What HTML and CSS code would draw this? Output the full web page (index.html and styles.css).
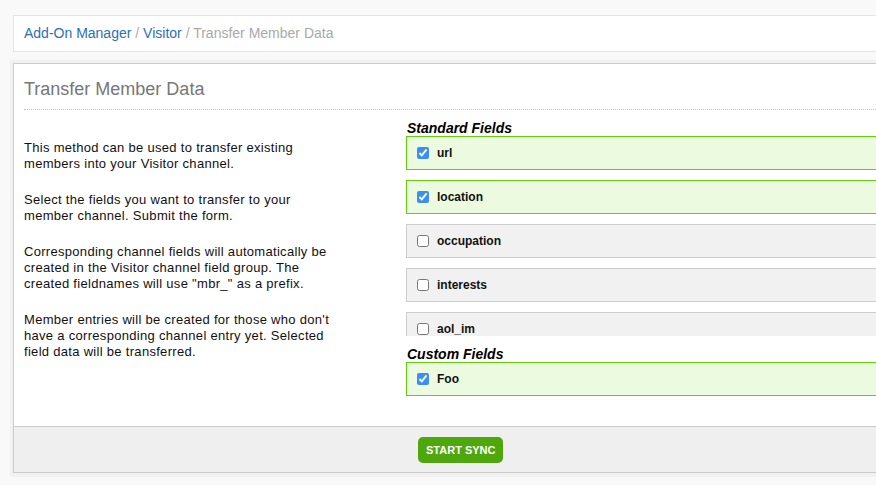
FILE: index.html
```html
<!DOCTYPE html>
<html>
<head>
<meta charset="UTF-8">
<title>Transfer Member Data</title>
<link rel="stylesheet" href="styles.css">
</head>
<body>
	<div class="page">
		<div class="breadcrumb">
			<a href="#">Add-On Manager</a> <span class="sep">/</span>
			<a href="#">Visitor</a> <span class="sep">/</span>
			<span class="current">Transfer Member Data</span>
		</div>

		<div class="wrap">
			<form class="panel">
				<div class="panel-head">
					<h2>Transfer Member Data</h2>
				</div>

				<div class="panel-body">
					<div class="intro">
						<p>This method can be used to transfer existing members into your Visitor channel.</p>
						<p>Select the fields you want to transfer to your member channel. Submit the form.</p>
						<p>Corresponding channel fields will automatically be created in the Visitor channel field group. The created fieldnames will use "mbr_" as a prefix.</p>
						<p>Member entries will be created for those who don't have a corresponding channel entry yet. Selected field data will be transferred.</p>
					</div>

					<div class="fields">
						<h4>Standard Fields</h4>
						<div class="field-list scroll">
							<label class="field checked"><input type="checkbox" name="url" checked><span>url</span></label>
							<label class="field checked"><input type="checkbox" name="location" checked><span>location</span></label>
							<label class="field"><input type="checkbox" name="occupation"><span>occupation</span></label>
							<label class="field"><input type="checkbox" name="interests"><span>interests</span></label>
							<label class="field"><input type="checkbox" name="aol_im"><span>aol_im</span></label>
						</div>
						<h4>Custom Fields</h4>
						<div class="field-list">
							<label class="field checked"><input type="checkbox" name="foo" checked><span>Foo</span></label>
						</div>
					</div>
				</div>

				<div class="panel-foot">
					<button type="button" class="btn">Start Sync</button>
				</div>
			</form>
		</div>
	</div>
</body>
</html>
```

FILE: styles.css
```css
* {
	margin: 0;
	padding: 0;
	box-sizing: border-box;
}
html, body {
	overflow: hidden;
}
body {
	background-color: #f9f9f9;
	color: #111;
	font-family: "Liberation Sans", Arial, Helvetica, sans-serif;
	font-size: 13px;
}
.page {
	width: 940px;
}

/* breadcrumb */
.breadcrumb {
	margin: 15px 0 0 13px;
	height: 37px;
	padding: 0 10px;
	line-height: 35px;
	font-size: 14px;
	background-color: #fff;
	border: 1px solid #e4e4e4;
	border-right: none;
	color: #aaa;
}
.breadcrumb a {
	color: #2b6fb8;
	text-decoration: none;
}
.breadcrumb .current {
	color: #a9a9a9;
}

/* panel */
.wrap {
	margin: 8px 0 0 10px;
	padding: 3px 0 4px 3px;
	background-color: #f1f1f1;
}
.panel {
	display: block;
	background-color: #fff;
	border: 1px solid #cbcbcb;
	border-right: none;
}
.panel-head {
	margin-left: 10px;
	padding: 14px 0 9px;
	border-bottom: 1px dotted #c4c4c4;
}
.panel-head h2 {
	font-size: 18px;
	line-height: 22px;
	font-weight: normal;
	color: #777;
}
.panel-body {
	display: flex;
	padding: 10px 0 30px 10px;
}
.intro {
	width: 312px;
	margin-right: 70px;
	padding-top: 20px;
	letter-spacing: 0.3px;
}
.intro p {
	line-height: 16px;
	margin-bottom: 20px;
}
.fields {
	flex: 1;
}
.fields h4 {
	font-size: 14px;
	line-height: 16px;
	font-style: italic;
	font-weight: bold;
	color: #000;
	padding-left: 1px;
}
.field-list.scroll {
	height: 200px;
	overflow: hidden;
	margin-bottom: 10px;
}
.field {
	display: flex;
	align-items: center;
	height: 34px;
	margin-bottom: 10px;
	padding-left: 10px;
	background-color: #f1f1f1;
	border: 1px solid #cdcdcd;
	border-right: none;
	font-size: 12px;
	font-weight: bold;
	color: #111;
}
.field:last-child {
	margin-bottom: 0;
}
.field.checked {
	background-color: #ecfbe0;
	border-color: #62cf0d;
}
.field input {
	width: 12px;
	height: 12px;
	margin: 0 8px 0 0;
	accent-color: #3a8ef5;
}

/* footer */
.panel-foot {
	padding: 10px 0 9px 404px;
	background-color: #efefef;
	border-top: 1px solid #cbcbcb;
}
.btn {
	height: 26px;
	padding: 0 8px;
	border: none;
	border-radius: 5px;
	background-color: #4fa70e;
	color: #fff;
	font-family: "Liberation Sans", Arial, sans-serif;
	font-size: 11px;
	font-weight: bold;
	text-transform: uppercase;
	cursor: pointer;
}
```
